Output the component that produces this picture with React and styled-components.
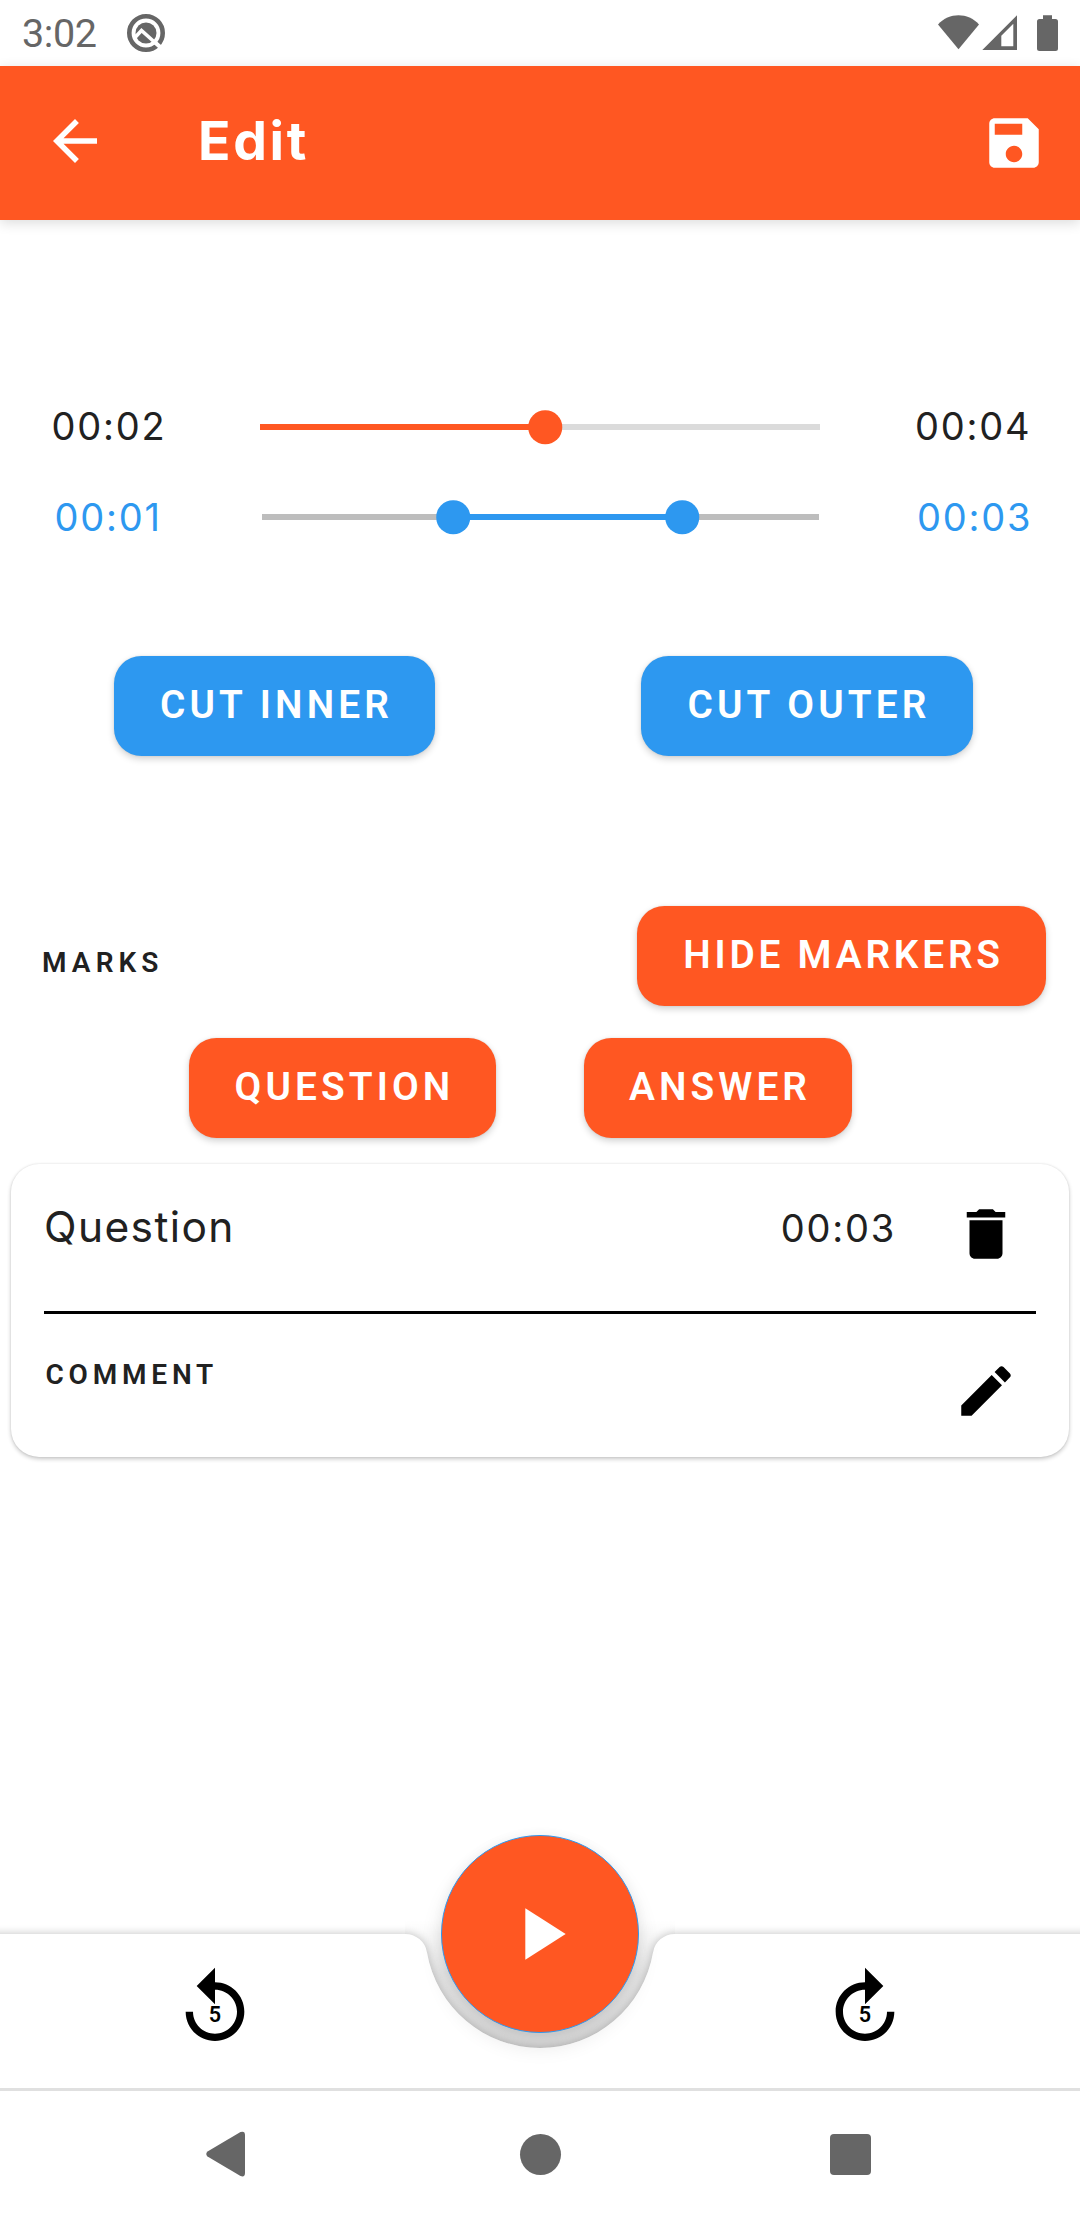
import React from "react";
import styled, { createGlobalStyle } from "styled-components";

const ORANGE = "#ff5722";
const BLUE = "#2d98f0";
const INK = "#212121";
const SYSTEM = "#666666";

const GlobalStyle = createGlobalStyle`
  * { box-sizing: border-box; }
  body { margin: 0; background: #fff; }
  svg { display: block; flex: none; }
`;

const Screen = styled.div`
  width: 1080px;
  height: 2220px;
  display: flex;
  flex-direction: column;
  overflow: hidden;
  background: #fff;
  color: ${INK};
  font-family: Inter, Roboto, sans-serif;
`;

const StatusBar = styled.header`
  height: 66px;
  flex: none;
  display: flex;
  align-items: center;
  padding: 0 20px 0 22px;
  color: ${SYSTEM};
`;

const Clock = styled.span`
  width: 104px;
  font-family: Roboto, sans-serif;
  font-size: 39.5px;
  line-height: 66px;
  padding-top: 2px;
  letter-spacing: -0.4px;
`;

const StatusIcons = styled.div`
  display: flex;
  align-items: center;
  margin-left: auto;
`;

const AppBar = styled.div`
  height: 154px;
  flex: none;
  display: flex;
  align-items: center;
  padding: 0 33px 0 42px;
  background: ${ORANGE};
  color: #fff;
  box-shadow: 0 3px 12px rgba(0, 0, 0, 0.14);
`;

const AppBarAction = styled.div`
  margin-bottom: ${(p) => p.$raise || 0}px;
`;

const Title = styled.h1`
  flex: 1;
  margin: 0 0 4px 90px;
  font-size: 53.5px;
  font-weight: 700;
  line-height: 64px;
  letter-spacing: 2.7px;
`;

const Content = styled.main`
  flex: 1;
  display: flex;
  flex-direction: column;
  padding-top: 162px;
`;

const SliderRow = styled.div`
  display: grid;
  grid-template-columns: 260px 560px 1fr;
  align-items: center;
  height: 90px;
  color: ${(p) => p.$color};
`;

const Time = styled.span`
  font-size: 38px;
  line-height: 46px;
  letter-spacing: 1.8px;
  color: ${(p) => p.$color || "inherit"};
  padding-left: ${(p) => p.$inset || 0}px;
  margin-bottom: ${(p) => p.$raise || 0}px;
`;

const Track = styled.div`
  position: relative;
  height: 6px;
  margin: ${(p) => p.$margin};
  background: ${(p) => p.$color};
`;

const Range = styled.div`
  position: absolute;
  top: 0;
  height: 100%;
  background: currentColor;
`;

const Thumb = styled.div`
  position: absolute;
  top: 50%;
  width: 33.5px;
  height: 33.5px;
  border-radius: 50%;
  background: currentColor;
  transform: translate(-50%, -50%);
`;

const ButtonRow = styled.div`
  display: flex;
  gap: ${(p) => p.$gap}px;
  padding-left: ${(p) => p.$left}px;
  margin-top: ${(p) => p.$top}px;
`;

const Button = styled.button`
  width: ${(p) => p.$width}px;
  height: 100px;
  flex: none;
  border: 0;
  border-radius: 27.5px;
  padding: 0 0 3px 4px;
  background: ${(p) => p.$color};
  color: #fff;
  font: 600 38.8px/46px Roboto, "Liberation Sans", sans-serif;
  letter-spacing: ${(p) => p.$spacing || 4.1}px;
  text-transform: uppercase;
  white-space: nowrap;
  box-shadow: 0 3px 7px rgba(0, 0, 0, 0.18), 0 0 2px rgba(0, 0, 0, 0.1);
`;

const MarksHeader = styled.div`
  display: flex;
  align-items: center;
  justify-content: space-between;
  margin-top: 150px;
  padding: 0 34px 0 42px;
`;

const Overline = styled.span`
  font-family: Roboto, "Liberation Sans", sans-serif;
  font-size: 28px;
  font-weight: 600;
  line-height: 40px;
  letter-spacing: ${(p) => p.$spacing}px;
  text-transform: uppercase;
  margin-top: ${(p) => p.$top}px;
  margin-left: ${(p) => p.$left || 0}px;
`;

const Card = styled.section`
  height: 293px;
  margin: 26px 11px 0;
  padding: 0 33px;
  border-radius: 28px;
  background: #fff;
  box-shadow: 0 2px 4px rgba(0, 0, 0, 0.22), 0 0 2px rgba(0, 0, 0, 0.1);
`;

const CardHeader = styled.div`
  height: 147px;
  display: flex;
  align-items: center;
  padding: 0 17px 7px 0;
`;

const MarkName = styled.span`
  flex: 1;
  font-size: 42.5px;
  line-height: 52px;
  letter-spacing: 1.4px;
  margin-bottom: 15px;
`;

const Divider = styled.div`
  height: 3px;
  background: #000;
`;

const CommentRow = styled.div`
  display: flex;
  align-items: flex-start;
  justify-content: space-between;
  padding-right: 17px;
`;

const IconSlot = styled.div`
  color: #000;
  margin: ${(p) => p.$margin || 0};
`;

const PlayerBar = styled.div`
  position: relative;
  height: 154px;
  flex: none;
  display: flex;
  justify-content: space-between;
  padding: 30px 171px 0;
  color: #000;
`;

const BarShape = styled.svg`
  position: absolute;
  left: 0;
  top: 0;
  overflow: visible;
`;

const ControlButton = styled.div`
  position: relative;
  width: 88px;
  height: 88px;
`;

const PlayButton = styled.button`
  position: absolute;
  left: 441px;
  top: -99px;
  width: 198px;
  height: 198px;
  padding: 0;
  display: grid;
  place-items: center;
  border: 1px solid ${BLUE};
  border-radius: 50%;
  background: ${ORANGE};
  color: #fff;
  box-shadow: 0 12px 22px rgba(0, 0, 0, 0.11), 0 0 12px rgba(0, 0, 0, 0.05);
`;

const NavBar = styled.nav`
  position: relative;
  height: 132px;
  flex: none;
  display: flex;
  align-items: center;
  justify-content: space-between;
  padding: 0 209px 3px 206px;
  border-top: 3px solid #e0e0e0;
  background: #fff;
  color: ${SYSTEM};
`;

const HomeKey = styled.div`
  width: 41px;
  height: 41px;
  margin-left: 5px;
  border-radius: 50%;
  background: currentColor;
`;

const RecentsKey = styled.div`
  width: 41px;
  height: 41px;
  border-radius: 4px;
  background: currentColor;
`;

const Icon = ({ size = 66, children }) => (
  <svg width={size} height={size} viewBox="0 0 24 24" fill="currentColor">
    {children}
  </svg>
);

const SliderLine = ({ line, margin, from, to, thumbs }) => (
  <Track $color={line} $margin={margin}>
    <Range style={{ left: from, width: to - from }} />
    {thumbs.map((x) => (
      <Thumb key={x} style={{ left: x }} />
    ))}
  </Track>
);

const QIcon = () => (
  <svg width="40" height="40" viewBox="0 0 40 40">
    <circle cx="20" cy="20" r="16.7" fill="none" stroke="currentColor" strokeWidth="4.6" />
    <circle cx="20" cy="20" r="10.5" fill="currentColor" />
    <path d="M9 24.500 L15.500 17.500 L34.500 34.500" fill="none" stroke="#fff" strokeWidth="3.600" />
    <path d="M28 28.500 L36 35.500" stroke="#fff" strokeWidth="4" />
  </svg>
);

const SystemStatus = () => (
  <svg width="124" height="40" viewBox="936 13 124 40" fill="currentColor">
    <path d="M938 24.500 C949 12.300 968 12.300 979 24.500 L958.500 49.300 Z" />
    <path d="M982.300 50 L1017 15.300 V50 Z M1001.300 35.800 V46.300 H1013.300 V23.800 Z" fillRule="evenodd" />
    <path d="M1043 15.300 H1052 V19 H1055.500 Q1058 19 1058 21.500 V48.500 Q1058 51 1055.500 51 H1039.500 Q1037 51 1037 48.500 V21.500 Q1037 19 1039.500 19 H1043 Z" />
  </svg>
);

const SeekIcon = ({ forward }) => (
  <Icon size={88}>
    <path
      transform={forward ? "translate(24 0) scale(-1 1)" : undefined}
      d="M12 5V1L7 6l5 5V7c3.310 0 6 2.690 6 6s-2.690 6-6 6-6-2.690-6-6H4c0 4.420 3.580 8 8 8s8-3.580 8-8-3.580-8-8-8z"
    />
    <text x="12" y="15.900" textAnchor="middle" fontFamily="Roboto, sans-serif" fontSize="5.900" fontWeight="600">
      5
    </text>
  </Icon>
);

const BAR_PATH =
  "M-30 0 H405 A22 22 0 0 1 427 18.4 A114.600 114.600 0 0 0 653 18.4 A22 22 0 0 1 675 0 H1110 V200 H-30 Z";

const BarBackground = () => (
  <BarShape width="1080" height="154" viewBox="0 0 1080 154">
    <defs>
      <linearGradient id="cradle" gradientUnits="userSpaceOnUse" x1="0" y1="-14" x2="0" y2="115">
        <stop offset="0" stopColor="#000" stopOpacity="0" />
        <stop offset="0.14" stopColor="#000" stopOpacity="0.03" />
        <stop offset="0.42" stopColor="#000" stopOpacity="0.09" />
        <stop offset="1" stopColor="#000" stopOpacity="0.12" />
      </linearGradient>
      <filter id="lift" filterUnits="userSpaceOnUse" x="-30" y="-40" width="1140" height="240">
        <feGaussianBlur stdDeviation="5" />
      </filter>
    </defs>
    <path d={BAR_PATH} fill="#000" opacity="0.24" filter="url(#lift)" />
    <path d="M405 0 V-14 H675 V0 L653 18.400 A114.600 114.600 0 0 1 427 18.400 Z" fill="url(#cradle)" />
    <path d={BAR_PATH} fill="#fff" />
  </BarShape>
);

export default function App() {
  return (
    <Screen>
      <GlobalStyle />
      <StatusBar>
        <Clock>3:02</Clock>
        <QIcon />
        <StatusIcons>
          <SystemStatus />
        </StatusIcons>
      </StatusBar>

      <AppBar>
        <AppBarAction $raise={4}>
          <Icon>
            <path d="M20 11H7.830l5.590-5.590L12 4l-8 8 8 8 1.410-1.410L7.830 13H20v-2z" />
          </Icon>
        </AppBarAction>
        <Title>Edit</Title>
        <AppBarAction>
          <Icon>
            <path d="M17 3H5c-1.110 0-2 .9-2 2v14c0 1.100.89 2 2 2h14c1.100 0 2-.9 2-2V7l-4-4zm-5 16c-1.660 0-3-1.340-3-3s1.340-3 3-3 3 1.340 3 3-1.340 3-3 3zm3-10H5V5h10v4z" />
          </Icon>
        </AppBarAction>
      </AppBar>

      <Content>
        <SliderRow $color={ORANGE}>
          <Time $inset={51.5} $raise={3} $color={INK}>00:02</Time>
          <SliderLine line="#dbdbdb" margin="0" from={0} to={285} thumbs={[285]} />
          <Time $inset={95} $raise={3} $color={INK}>00:04</Time>
        </SliderRow>
        <SliderRow $color={BLUE}>
          <Time $inset={54.5}>00:01</Time>
          <SliderLine line="#bdbdbd" margin="0 1px 0 2px" from={191} to={420} thumbs={[191, 420]} />
          <Time $inset={97}>00:03</Time>
        </SliderRow>

        <ButtonRow $left={114} $gap={206} $top={94}>
          <Button $width={321} $color={BLUE}>Cut inner</Button>
          <Button $width={332} $color={BLUE}>Cut outer</Button>
        </ButtonRow>

        <MarksHeader>
          <Overline $spacing={5.1} $top={13}>Marks</Overline>
          <Button $width={409} $color={ORANGE} $spacing={3.8}>Hide markers</Button>
        </MarksHeader>

        <ButtonRow $left={189} $gap={88} $top={32}>
          <Button $width={307} $color={ORANGE}>Question</Button>
          <Button $width={268} $color={ORANGE}>Answer</Button>
        </ButtonRow>

        <Card>
          <CardHeader>
            <MarkName>Question</MarkName>
            <Time $raise={12}>00:03</Time>
            <IconSlot $margin="0 0 0 57px">
              <Icon>
                <path d="M6 19c0 1.100.9 2 2 2h8c1.100 0 2-.9 2-2V7H6v12zM19 4h-3.500l-1-1h-5l-1 1H5v2h14V4z" />
              </Icon>
            </IconSlot>
          </CardHeader>
          <Divider />
          <CommentRow>
            <Overline $spacing={4.8} $top={41} $left={1.5}>Comment</Overline>
            <IconSlot $margin="44px 0 0">
              <Icon>
                <path d="M3 17.250V21h3.750L17.810 9.940l-3.750-3.750L3 17.250zM20.710 7.040c.39-.39.39-1.020 0-1.410l-2.340-2.340c-.39-.39-1.020-.39-1.410 0l-1.830 1.830 3.750 3.750 1.830-1.830z" />
              </Icon>
            </IconSlot>
          </CommentRow>
        </Card>
      </Content>

      <PlayerBar>
        <BarBackground />
        <ControlButton>
          <SeekIcon />
        </ControlButton>
        <ControlButton>
          <SeekIcon forward />
        </ControlButton>
        <PlayButton>
          <Icon size={88}>
            <path d="M8 5v14l11-7z" />
          </Icon>
        </PlayButton>
      </PlayerBar>

      <NavBar>
        <svg width="39" height="46" viewBox="0 0 39 46" fill="currentColor">
          <path d="M1.500 20.500 L34.500 1 Q39 -0.500 39 4 V42 Q39 46.500 34.500 45 L1.500 25.500 Q-1 23 1.500 20.500 Z" />
        </svg>
        <HomeKey />
        <RecentsKey />
      </NavBar>
    </Screen>
  );
}
